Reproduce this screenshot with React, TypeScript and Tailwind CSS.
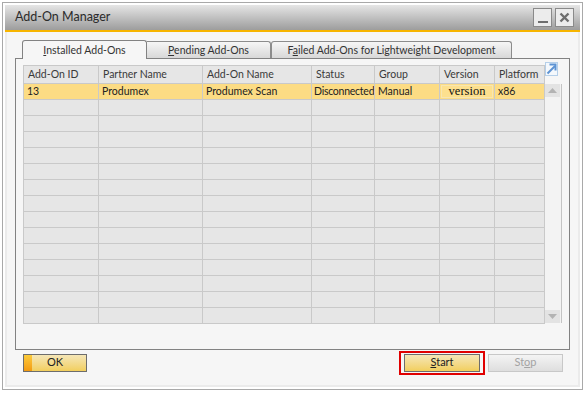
import React from "react";

const cols = [
  { name: "Add-On ID", w: "w-[75px]" },
  { name: "Partner Name", w: "w-[104px]" },
  { name: "Add-On Name", w: "w-[109px]" },
  { name: "Status", w: "w-[63px]" },
  { name: "Group", w: "w-[65px]" },
  { name: "Version", w: "w-[55px]" },
  { name: "Platform", w: "w-[50px]" },
];

const firstRow = ["13", "Produmex", "Produmex Scan", "Disconnected", "Manual", "version", "x86"];

export default function App() {
  const emptyRows = Array.from({ length: 14 });

  return (
    <div className="w-[586px] h-[394px] bg-white pt-[2px] pl-[2px] font-['Lato',sans-serif] text-[#333]">
      {/* window frame */}
      <div className="w-[581px] h-[388px] border border-[#a9a9a9] bg-white p-[2px] flex flex-col">
        {/* title bar */}
        <div className="h-[27px] shrink-0 flex items-center justify-between bg-gradient-to-b from-[#e6e6e6] to-[#9d9d9d] border-b-2 border-[#f7b500] pl-[10px] pr-[6px]">
          <span className="text-[12.5px] text-[#2b2b2b]">Add-On Manager</span>
          <div className="flex gap-[3px] -mt-[1px]">
            <div className="w-[19px] h-[19px] border border-[#8a8a8a] bg-[#ececec] flex items-end justify-center pb-[3px]">
              <div className="w-[10px] h-[2px] bg-[#6e6e6e]" />
            </div>
            <div className="w-[19px] h-[19px] border border-[#8a8a8a] bg-[#ececec] flex items-center justify-center">
              <svg width="11" height="11" viewBox="0 0 11 11">
                <path d="M1.5 1.5 L9.5 9.5 M9.5 1.5 L1.5 9.5" stroke="#6e6e6e" strokeWidth="2.4" />
              </svg>
            </div>
          </div>
        </div>

        {/* body */}
        <div className="flex-1 bg-[#f6f6f6] border-x-2 border-b-2 border-[#ebebeb] px-[8px] pt-[8px] flex flex-col">
          {/* tabs */}
          <div className="flex items-end h-[18px] pl-[7px] relative z-10 text-[10.5px] whitespace-nowrap">
            <div className="w-[125px] h-[19px] -mb-[1px] bg-[#f6f6f6] border border-b-0 border-[#828282] rounded-t-[3px] flex items-center justify-center pt-[1px]">
              <span><span className="underline">I</span>nstalled Add-Ons</span>
            </div>
            <div className="w-[124px] h-[17px] border border-b-0 border-l-0 border-[#8c8c8c] rounded-tr-[3px] bg-gradient-to-b from-[#f6f6f6] to-[#d8d8d8] flex items-center justify-center pt-[1px]">
              <span><span className="underline">P</span>ending Add-Ons</span>
            </div>
            <div className="w-[241px] h-[17px] border border-b-0 border-[#8c8c8c] rounded-t-[3px] bg-gradient-to-b from-[#f6f6f6] to-[#d8d8d8] flex items-center justify-center pt-[1px]">
              <span>F<span className="underline">a</span>iled Add-Ons for Lightweight Development</span>
            </div>
          </div>

          {/* panel */}
          <div className="h-[292px] shrink-0 border border-[#828282] bg-[#f6f6f6] pl-[7px] pt-[6px] flex">
            {/* grid */}
            <div className="border-l border-t border-[#c9c9c9] self-start text-[10.5px] leading-none">
              <div className="flex">
                {cols.map((c) => (
                  <div key={c.name} className={`${c.w} h-[18px] border-r border-b border-[#c9c9c9] bg-[#e6e6e6] pl-[4px] flex items-center text-[#3a3a3a] whitespace-nowrap overflow-hidden`}>
                    {c.name}
                  </div>
                ))}
              </div>
              <div className="flex">
                {cols.map((c, i) =>
                  i === 5 ? (
                    <div key={c.name} className={`${c.w} h-[16px] border-r border-b border-[#c9c9c9] bg-[#fcdc84] px-[1px] py-[1px] flex`}>
                      <div className="flex-1 border border-[#f8e6b0] bg-[#fde08e] flex items-center justify-center font-['Liberation_Serif',serif] text-[12.5px] text-[#111]">
                        {firstRow[i]}
                      </div>
                    </div>
                  ) : (
                    <div key={c.name} className={`${c.w} h-[16px] border-r border-b border-[#c9c9c9] bg-[#fcdc84] ${i === 3 ? "pl-[2px] tracking-[-0.25px]" : "pl-[3px]"} flex items-center text-[#222] whitespace-nowrap overflow-hidden`}>
                      {firstRow[i]}
                    </div>
                  )
                )}
              </div>
              {emptyRows.map((_, r) => (
                <div key={r} className="flex">
                  {cols.map((c) => (
                    <div key={c.name} className={`${c.w} h-[16px] border-r border-b border-[#c9c9c9] bg-[#e6e6e6]`} />
                  ))}
                </div>
              ))}
            </div>

            {/* expand icon + scrollbar */}
            <div className="flex flex-col">
              <div className="w-[13px] h-[14px] -mt-[3px] border border-[#b5cfe9] bg-[#f4f8fc] flex items-center justify-center">
                <svg width="11" height="12" viewBox="0 0 11 12">
                  <path d="M1.5 10.5 L9 3" stroke="#5d93d3" strokeWidth="2" />
                  <path d="M3.5 1.5 H9.5 V7.5" stroke="#5d93d3" strokeWidth="2" fill="none" />
                </svg>
              </div>
              <div className="mt-[8px] w-[17px] h-[239px] bg-[#f3f3f3] border-r border-[#c4c4c4] flex flex-col justify-between items-start">
                <div className="w-[15px] h-[13px] bg-[#e3e3e3] flex items-center justify-center">
                  <svg width="9" height="5" viewBox="0 0 9 5"><path d="M0 5 L4.5 0 L9 5 Z" fill="#b3b3b3" /></svg>
                </div>
                <div className="w-[15px] h-[13px] bg-[#e3e3e3] flex items-center justify-center">
                  <svg width="9" height="5" viewBox="0 0 9 5"><path d="M0 0 L4.5 5 L9 0 Z" fill="#b3b3b3" /></svg>
                </div>
              </div>
            </div>
          </div>

          {/* buttons */}
          <div className="h-[25px] shrink-0 flex items-center pl-[8px] pr-[7px] text-[10.5px]">
            <button className="w-[64px] h-[18px] border border-[#6d6d6d] flex bg-gradient-to-b from-[#f5e6b6] to-[#f2cf5c]">
              <span className="w-[8px] h-full bg-gradient-to-b from-[#fbcb3a] to-[#f29a10]" />
              <span className="flex-1 flex items-center justify-center pr-[8px] text-[#222] text-[11px]">OK</span>
            </button>
            <div className="ml-auto border-2 border-[#e00000] px-[3px] py-[1px]">
              <button className="w-[76px] h-[18px] border border-[#6d6d6d] bg-gradient-to-b from-[#f5e6b6] to-[#f2cf5c] flex items-center justify-center text-[#222] text-[11px]">
                <span><span className="underline">S</span>tart</span>
              </button>
            </div>
            <button className="ml-[3px] w-[75px] h-[18px] border border-[#c8c8c8] bg-gradient-to-b from-[#f4f4f4] to-[#dedede] flex items-center justify-center text-[#a3a3a3] text-[11px]">
              <span>St<span className="underline">o</span>p</span>
            </button>
          </div>
        </div>
      </div>
    </div>
  );
}
